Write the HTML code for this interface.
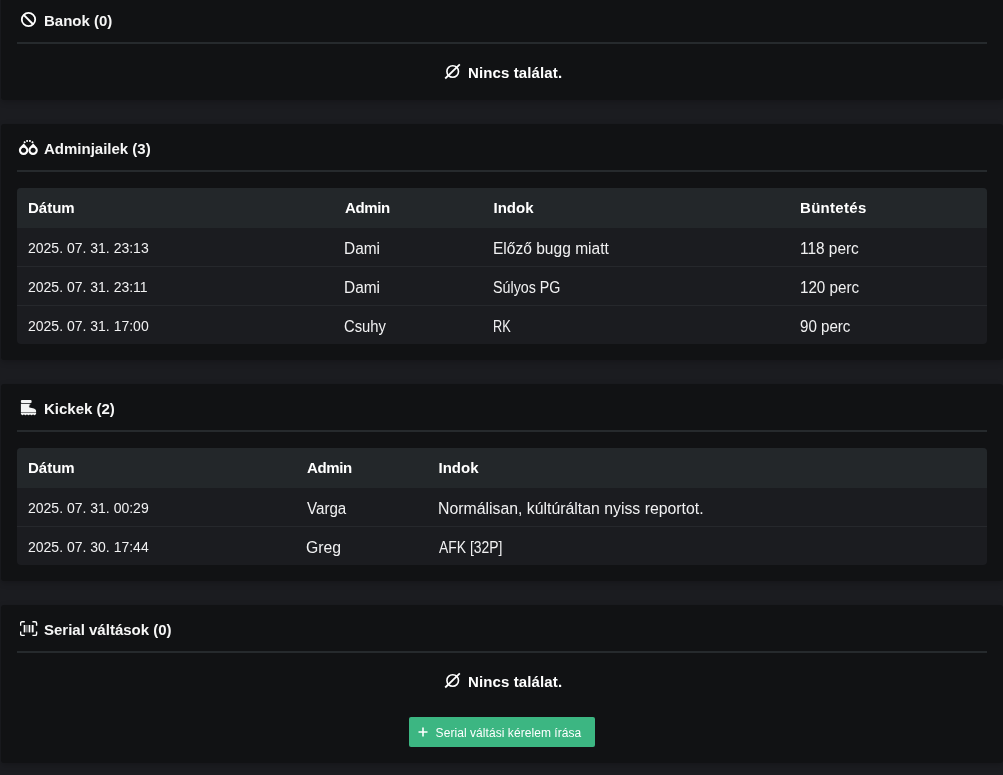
<!DOCTYPE html>
<html lang="hu">
<head>
<meta charset="utf-8">
<title>UCP</title>
<style>
*{box-sizing:border-box;margin:0;padding:0}
html,body{width:1003px;height:775px;overflow:hidden;background:#1b1c20}
#w{position:absolute;left:0;top:0;width:1003px;height:775px;will-change:transform}
body{font-family:"Liberation Sans",sans-serif;color:#fff;position:relative}
.card{position:absolute;left:1px;width:1002px;background:#111214;border-radius:3px;box-shadow:0 2px 6px rgba(0,0,0,.22)}
.hd{position:absolute;left:16px;top:13px;height:22px;line-height:22px;font-size:15px;font-weight:700;white-space:nowrap;color:#f6f6f6}
.hd .tx{position:absolute;left:27px;top:1px}
.hd svg{position:absolute;display:block}
.hr{position:absolute;left:16px;width:970px;top:46px;height:2px;background:#262a2d}
.empty{position:absolute;left:16px;width:970px;top:64px;height:24px;line-height:24px;font-size:15px;font-weight:700;white-space:nowrap}
.empty svg{position:absolute;left:428px;top:4px}
.empty span{position:absolute;left:451px;top:1px;letter-spacing:.12px}
table{position:absolute;left:16px;top:64px;width:970px;border-collapse:separate;border-spacing:0;background:#1b1c20;border-radius:4px;overflow:hidden;table-layout:fixed}
th{height:40px;background:#23272a;text-align:left;font-size:15px;font-weight:700;padding:0 0 2px 11px;white-space:nowrap}
td{height:39px;border-bottom:1px solid #26282c;font-size:15px;font-weight:400;padding:2px 0 0 11px;white-space:nowrap;color:#f1f1f2}
tr:last-child td{height:38px;border-bottom:0}
td{font-size:16px;padding:4px 0 0 10.4px}
td.d{font-size:14px;padding:2px 0 0 11px}
.s{display:inline-block;transform-origin:0 50%;white-space:nowrap}
.btn{position:absolute;left:408px;top:112px;width:186px;height:30px;background:#3cb682;border-radius:2px;font-size:12px;line-height:30px;color:#fff;white-space:nowrap}
.btn svg{position:absolute;left:9px;top:10px}
.btn span{position:absolute;left:26.6px;top:1px;letter-spacing:.06px}
</style>
</head>
<body>
<div id="w">

<div class="card" style="top:-4px;height:104px">
  <div class="hd">
    <svg style="left:3px;top:2px" width="17" height="17" viewBox="0 0 17 17"><circle cx="8.5" cy="8.5" r="6.7" fill="none" stroke="#fff" stroke-width="1.8"/><path d="M3.7 3.9 L13.3 13.5" stroke="#fff" stroke-width="2"/></svg>
    <span class="tx">Banok (0)</span>
  </div>
  <div class="hr"></div>
  <div class="empty">
    <svg width="16" height="16" viewBox="0 0 16 16" style="overflow:visible"><circle cx="7.7" cy="7.5" r="5.8" fill="none" stroke="#fff" stroke-width="1.6"/><path d="M0.2 14.5 L14.8 0.3" stroke="#fff" stroke-width="1.8"/></svg>
    <span>Nincs találat.</span>
  </div>
</div>

<div class="card" style="top:124px;height:236px">
  <div class="hd">
    <svg style="left:1px;top:1px" width="22" height="19" viewBox="0 0 22 19"><g fill="#fff" fill-rule="evenodd"><path d="M5.7 5.5 L8.45 8.5 A4.7 4.7 0 1 1 2.75 8.5 Z M5.6 9.75 a2.55 2.55 0 1 0 0.001 0 Z"/><path d="M15.2 5.5 L17.95 8.5 A4.7 4.7 0 1 1 12.25 8.5 Z M15.1 9.75 a2.55 2.55 0 1 0 0.001 0 Z"/></g><g fill="#fff"><rect x="5.7" y="3.4" width="1.8" height="1.7" transform="rotate(-35 6.6 4.2)"/><rect x="8.2" y="2.1" width="1.8" height="1.7"/><rect x="11" y="2.1" width="1.8" height="1.7"/><rect x="13.6" y="3.4" width="1.8" height="1.7" transform="rotate(35 14.5 4.2)"/></g></svg>
    <span class="tx">Adminjailek (3)</span>
  </div>
  <div class="hr"></div>
  <table>
    <colgroup><col style="width:317px"><col style="width:149px"><col style="width:306px"><col></colgroup>
    <tr><th>Dátum</th><th style="letter-spacing:-.4px">Admin</th><th style="padding-left:10.5px">Indok</th><th style="letter-spacing:.3px">Büntetés</th></tr>
    <tr><td class="d">2025. 07. 31. 23:13</td><td><span class="s" style="transform:scaleX(0.965)">Dami</span></td><td><span class="s" style="transform:scaleX(0.972)">Előző bugg miatt</span></td><td><span class="s" style="transform:scaleX(0.963);margin-left:.7px">118 perc</span></td></tr>
    <tr><td class="d">2025. 07. 31. 23:11</td><td><span class="s" style="transform:scaleX(0.965)">Dami</span></td><td><span class="s" style="transform:scaleX(0.892)">Súlyos PG</span></td><td><span class="s" style="transform:scaleX(0.948);margin-left:.7px">120 perc</span></td></tr>
    <tr><td class="d">2025. 07. 31. 17:00</td><td><span class="s" style="transform:scaleX(0.925)">Csuhy</span></td><td><span class="s" style="transform:scaleX(0.795)">RK</span></td><td><span class="s" style="transform:scaleX(0.945);margin-left:.7px">90 perc</span></td></tr>
  </table>
</div>

<div class="card" style="top:384px;height:197px">
  <div class="hd">
    <svg style="left:3px;top:2px" width="18" height="18" viewBox="0 0 18 18"><g fill="#f4f4f4"><rect x="0.9" y="1" width="10.7" height="2.9" rx="0.9"/><path d="M0.9 4.8 H10.4 V5.5 L8.7 6.1 L10.2 6.9 L8.7 7.6 L9.5 8.4 C12.5 8.8 16.1 9.6 16.1 11.8 V12.9 H0.9 Z"/><path d="M0.9 13.6 H16.1 V15.1 Q14.6 17.3 13.06 15.3 Q11.5 17.3 10.02 15.3 Q8.5 17.3 6.98 15.3 Q5.5 17.3 3.94 15.3 Q2.4 17.3 0.9 15.1 Z"/></g></svg>
    <span class="tx">Kickek (2)</span>
  </div>
  <div class="hr"></div>
  <table>
    <colgroup><col style="width:279px"><col style="width:132px"><col></colgroup>
    <tr><th>Dátum</th><th style="letter-spacing:-.4px">Admin</th><th style="padding-left:10.5px">Indok</th></tr>
    <tr><td class="d">2025. 07. 31. 00:29</td><td><span class="s" style="transform:scaleX(0.946);margin-left:1px">Varga</span></td><td><span class="s" style="transform:scaleX(0.989)">Normálisan, kúltúráltan nyiss reportot.</span></td></tr>
    <tr><td class="d">2025. 07. 30. 17:44</td><td><span class="s" style="transform:scaleX(0.985)">Greg</span></td><td><span class="s" style="transform:scaleX(0.870);margin-left:1px">AFK [32P]</span></td></tr>
  </table>
</div>

<div class="card" style="top:605px;height:158px">
  <div class="hd">
    <svg style="left:3px;top:3px" width="18" height="16" viewBox="0 0 18 16"><path d="M0.6 4.8 V2.3 Q0.6 0.8 2.1 0.8 H4.8 M12.4 0.8 H15.1 Q16.6 0.8 16.6 2.3 V4.8 M0.6 10.4 V12.9 Q0.6 14.4 2.1 14.4 H4.8 M12.4 14.4 H15.1 Q16.6 14.4 16.6 12.9 V10.4" fill="none" stroke="#fff" stroke-width="1.4"/><g fill="#fff"><rect x="3.7" y="4" width="1.7" height="7.4"/><rect x="6.3" y="4" width="1.2" height="7.4" opacity=".6"/><rect x="8.6" y="4" width="1.5" height="7.4"/><rect x="10.6" y="4" width="0.8" height="7.4" opacity=".6"/><rect x="11.9" y="4" width="1.7" height="7.4"/></g></svg>
    <span class="tx">Serial váltások (0)</span>
  </div>
  <div class="hr"></div>
  <div class="empty">
    <svg width="16" height="16" viewBox="0 0 16 16" style="overflow:visible"><circle cx="7.7" cy="7.5" r="5.8" fill="none" stroke="#fff" stroke-width="1.6"/><path d="M0.2 14.5 L14.8 0.3" stroke="#fff" stroke-width="1.8"/></svg>
    <span>Nincs találat.</span>
  </div>
  <div class="btn">
    <svg width="10" height="10" viewBox="0 0 10 10"><path d="M5 0.5 V9.5 M0.5 5 H9.5" stroke="#fff" stroke-width="1.6"/></svg>
    <span>Serial váltási kérelem írása</span>
  </div>
</div>

</div>
</body>
</html>
